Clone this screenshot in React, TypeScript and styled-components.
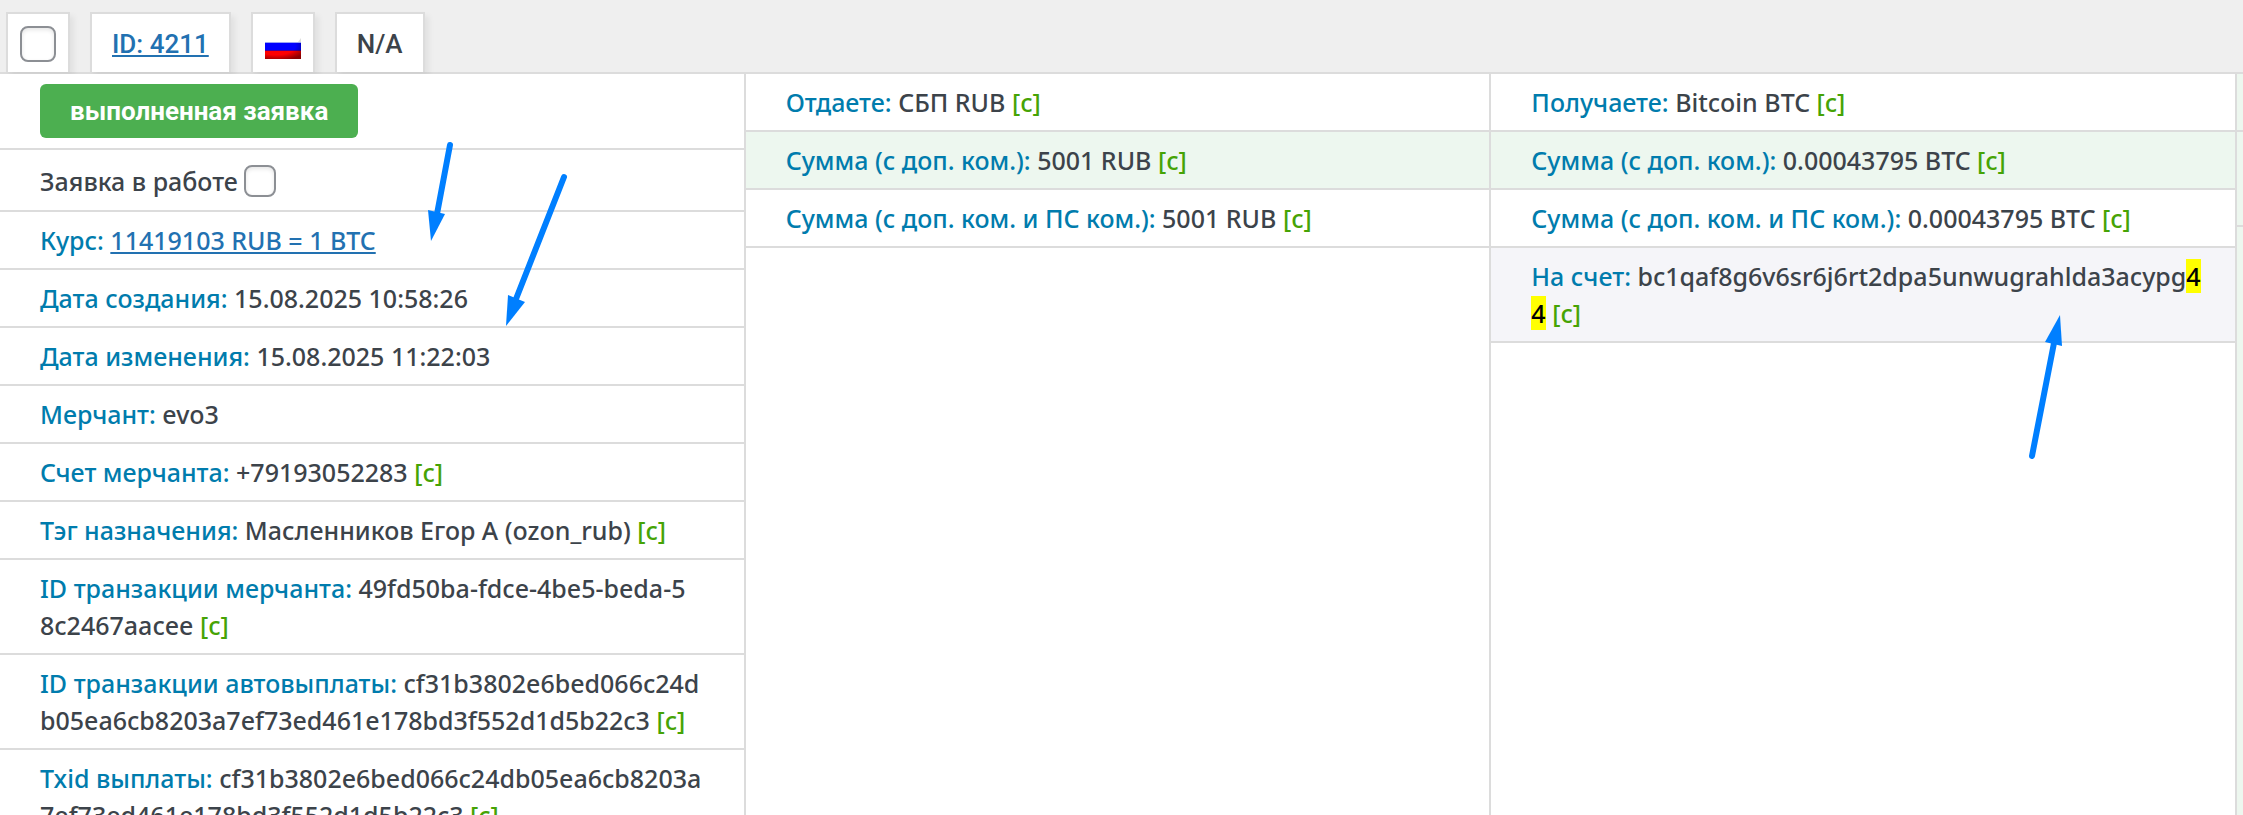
import React from "react";
import styled, { createGlobalStyle } from "styled-components";

const Global = createGlobalStyle`
  * { box-sizing: border-box; }
  body {
    margin: 0;
    background: #efefef;
    color: #3c434a;
    font: 500 25px/37px "Noto Sans", "Open Sans", sans-serif;
    overflow: hidden;
  }
`;

const Page = styled.main`
  position: relative;
  display: flex;
  flex-direction: column;
  height: 100vh;
  overflow: hidden;
`;

const Tabs = styled.header`
  display: flex;
  gap: 20px;
  padding: 12px 6px 0;
  border-bottom: 2px solid #dcdcdc;
  font-family: Roboto, sans-serif;
  font-size: 26px;
`;

const Tab = styled.div<{ $pad?: number }>`
  display: flex;
  align-items: center;
  justify-content: center;
  height: 60px;
  padding: 2px ${(p) => p.$pad ?? 20}px 0;
  background: #fff;
  border: 2px solid #dcdcdc;
  border-bottom: 0;
  box-shadow: 4px 4px 6px rgba(0, 0, 0, 0.06);
`;

const Check = styled.input<{ $size: number }>`
  appearance: none;
  width: ${(p) => p.$size}px;
  height: ${(p) => p.$size}px;
  margin: 0;
  background: #fff;
  border: 2px solid #8c8f94;
  border-radius: 8px;
  box-shadow: inset 0 2px 4px rgba(0, 0, 0, 0.1);
`;

const Link = styled.a`
  color: #2271b1;
  text-decoration: underline;
`;

const Columns = styled.div`
  flex: 1;
  display: grid;
  grid-template-columns: repeat(3, minmax(0, 1fr)) 6px;
  min-height: 0;
  background: #fff;
`;

const Column = styled.section`
  border-right: 2px solid #dcdcdc;
`;

const Row = styled.div<{ $bg?: string }>`
  padding: 10px 24px 9px 40px;
  border-bottom: 2px solid #dcdcdc;
  background: ${(p) => p.$bg ?? "#fff"};
  overflow-wrap: anywhere;
`;

const StatusRow = styled(Row)`
  padding: 10px 40px;
`;

const WorkLabel = styled.label`
  display: flex;
  align-items: center;
  gap: 6px;
  height: 62px;
  padding: 2px 40px 0;
  border-bottom: 2px solid #dcdcdc;
`;

const Status = styled.button`
  display: block;
  height: 54px;
  padding: 0 30px;
  border: 0;
  border-radius: 6px;
  background: #4caf50;
  color: #fff;
  font: 700 26px/54px Roboto, sans-serif;
`;

const Label = styled.span`
  color: #007cad;
`;

const Copy = styled.button`
  padding: 0;
  border: 0;
  background: none;
  color: #46a305;
  font: inherit;
`;

const Mark = styled.mark`
  background: #ff0;
  color: #000;
`;

const Edge = styled.aside`
  background: #edf7ef;
`;

const EdgeCell = styled.div<{ $h: number }>`
  height: ${(p) => p.$h}px;
  border-bottom: 2px solid #dcdcdc;
`;

const Overlay = styled.svg`
  position: absolute;
  top: 0;
  left: 0;
  pointer-events: none;
`;

type ItemProps = {
  label: string;
  copy?: boolean;
  bg?: string;
  children: React.ReactNode;
};

const Item = ({ label, copy, bg, children }: ItemProps) => (
  <Row $bg={bg}>
    <Label>{label}:</Label> {children}
    {copy && <> <Copy type="button">[c]</Copy></>}
  </Row>
);

const Flag = () => (
  <svg width="36" height="30" viewBox="0 0 36 30" role="img" aria-label="RU">
    <defs>
      <radialGradient id="flagShade" cx="0.3" cy="0.2" r="0.9">
        <stop offset="0.6" stopColor="#000" stopOpacity="0" />
        <stop offset="1" stopColor="#000" stopOpacity="0.45" />
      </radialGradient>
    </defs>
    <rect width="36" height="13" fill="#fff" />
    <path d="M36 9v4h-3z" fill="#ddd" />
    <rect y="13" width="36" height="1" fill="#9aa4f5" />
    <rect y="14" width="36" height="8" fill="#00f" />
    <rect y="21" width="36" height="1" fill="#4a0090" />
    <rect y="22" width="36" height="8" fill="#f00" />
    <rect y="14" width="36" height="16" fill="url(#flagShade)" />
  </svg>
);

export default function App() {
  return (
    <Page>
      <Global />
      <Tabs>
        <Tab $pad={12}>
          <Check type="checkbox" aria-label="ID 4211" $size={36} />
        </Tab>
        <Tab><Link href="#4211">ID: 4211</Link></Tab>
        <Tab $pad={12}><Flag /></Tab>
        <Tab>N/A</Tab>
      </Tabs>
      <Columns>
        <Column>
          <StatusRow><Status type="button">выполненная заявка</Status></StatusRow>
          <WorkLabel>
            Заявка в работе <Check type="checkbox" $size={32} />
          </WorkLabel>
          <Item label="Курс"><Link href="#rate">11419103 RUB = 1 BTC</Link></Item>
          <Item label="Дата создания">15.08.2025 10:58:26</Item>
          <Item label="Дата изменения">15.08.2025 11:22:03</Item>
          <Item label="Мерчант">evo3</Item>
          <Item label="Счет мерчанта" copy>+79193052283</Item>
          <Item label="Тэг назначения" copy>Масленников Егор А (ozon_rub)</Item>
          <Item label="ID транзакции мерчанта" copy>49fd50ba-fdce-4be5-beda-5<br />8c2467aacee</Item>
          <Item label="ID транзакции автовыплаты" copy>cf31b3802e6bed066c24d<br />b05ea6cb8203a7ef73ed461e178bd3f552d1d5b22c3</Item>
          <Item label="Txid выплаты" copy>cf31b3802e6bed066c24db05ea6cb8203a<br />7ef73ed461e178bd3f552d1d5b22c3</Item>
        </Column>
        <Column>
          <Item label="Отдаете" copy>СБП RUB</Item>
          <Item label="Сумма (с доп. ком.)" copy bg="#edf7ef">5001 RUB</Item>
          <Item label="Сумма (с доп. ком. и ПС ком.)" copy>5001 RUB</Item>
        </Column>
        <Column>
          <Item label="Получаете" copy>Bitcoin BTC</Item>
          <Item label="Сумма (с доп. ком.)" copy bg="#edf7ef">0.00043795 BTC</Item>
          <Item label="Сумма (с доп. ком. и ПС ком.)" copy>0.00043795 BTC</Item>
          <Item label="На счет" copy bg="#f5f5f9">
            bc1qaf8g6v6sr6j6rt2dpa5unwugrahlda3acypg<Mark>4<br />4</Mark>
          </Item>
        </Column>
        <Edge>
          <EdgeCell $h={58} />
          <EdgeCell $h={95} />
        </Edge>
      </Columns>
      <Overlay width="2243" height="815" fill="#007fff" stroke="#007fff" aria-hidden="true">
        <path d="M450 145 L437 214" strokeWidth="6" strokeLinecap="round" />
        <path d="M428 210 L445 214 L431 241 Z" stroke="none" />
        <path d="M564 177 L516 299" strokeWidth="6" strokeLinecap="round" />
        <path d="M508 295 L525 302 L506 326 Z" stroke="none" />
        <path d="M2032 456 L2054 343" strokeWidth="6" strokeLinecap="round" />
        <path d="M2045 342 L2062 346 L2060 315 Z" stroke="none" />
      </Overlay>
    </Page>
  );
}
